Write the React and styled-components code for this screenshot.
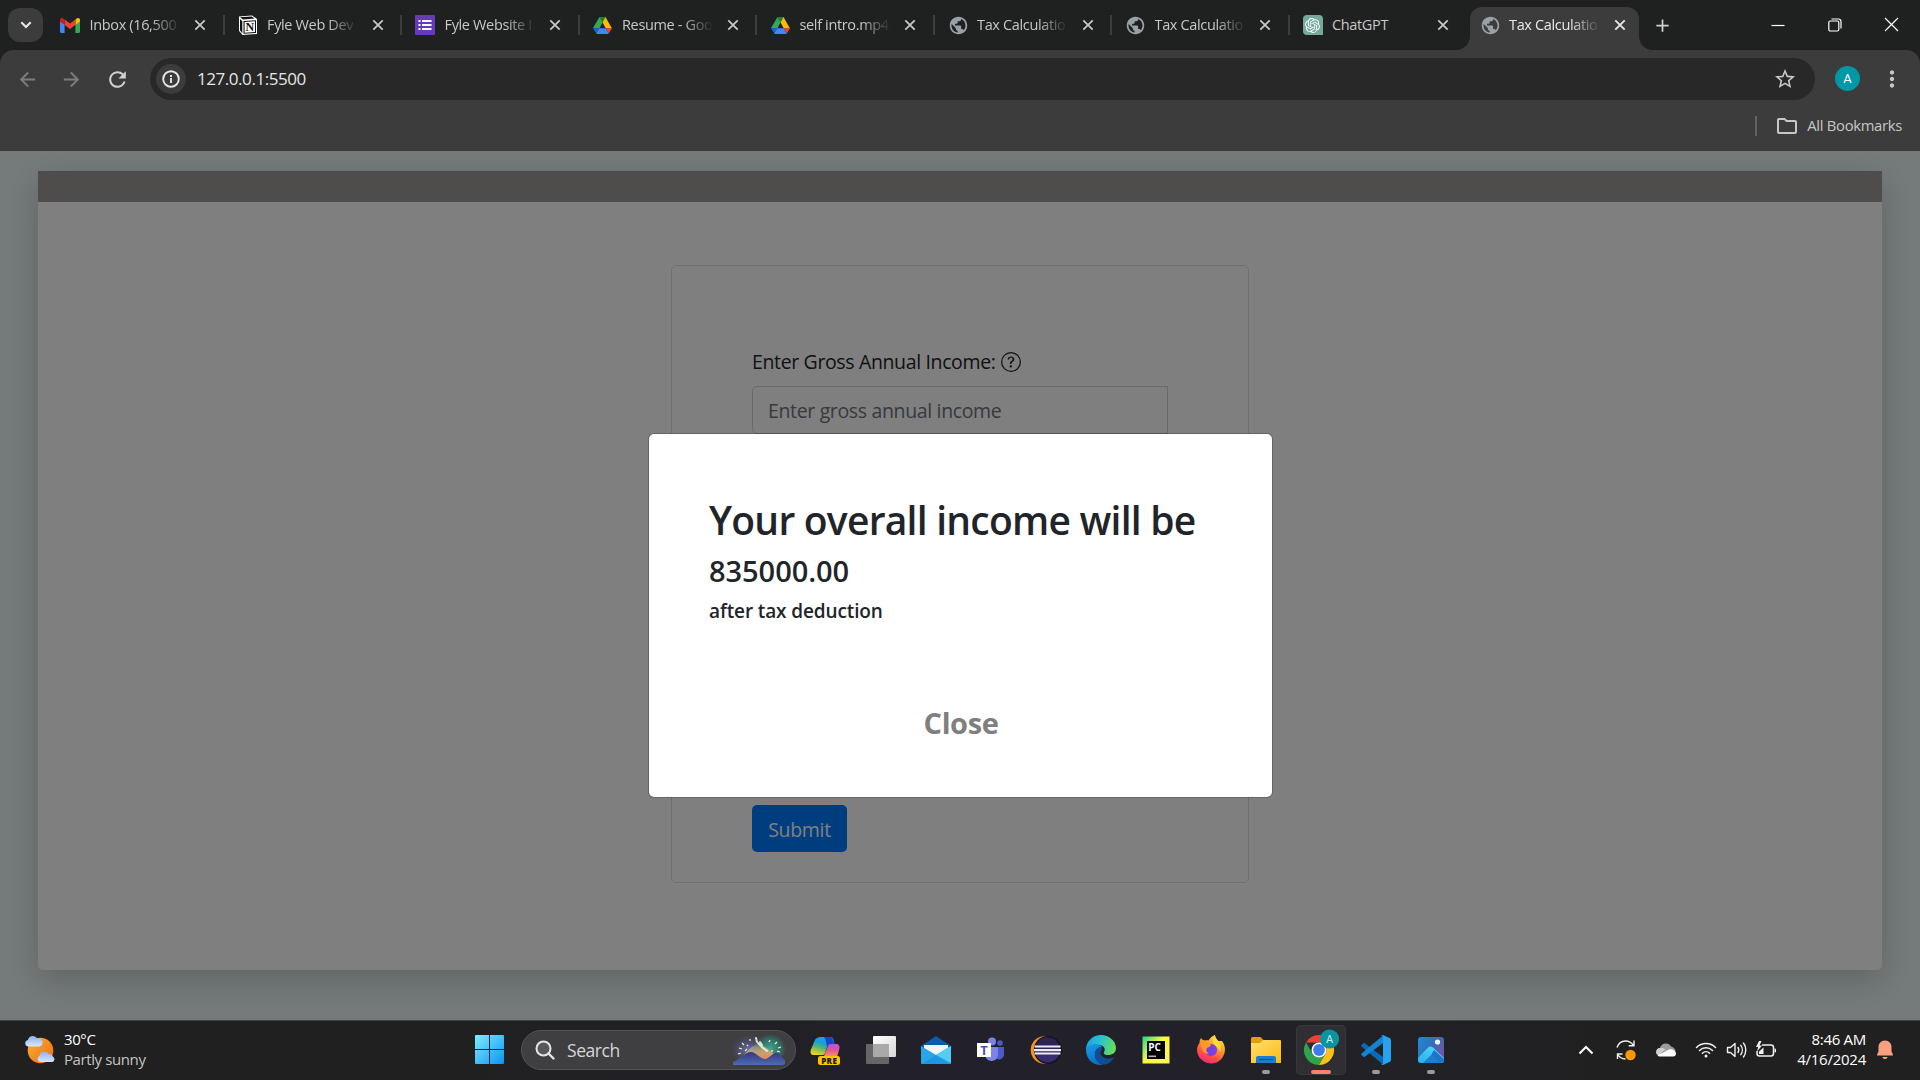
import React from "react";
import styled, { createGlobalStyle, css } from "styled-components";
import {
  MdPublic, MdAdd, MdArrowBack, MdArrowForward,
  MdRefresh, MdStarBorder, MdMoreVert, MdOutlineFolder,
} from "react-icons/md";
import { SiOpenai } from "react-icons/si";

const GlobalStyle = createGlobalStyle`
  *, *::before, *::after { box-sizing: border-box; }
  body {
    margin: 0;
    overflow: hidden;
    font-family: "Open Sans", "Noto Sans", sans-serif;
    background: #202020;
  }
  svg { display: block; flex: none; }
  h2, h4, h6 { margin: 0; font-weight: 600; }
`;

const Screen = styled.div`
  width: 1920px;
  height: 1080px;
  display: flex;
  flex-direction: column;
`;

const Label = styled.span`
  font-size: ${(p) => p.$size}px;
  letter-spacing: ${(p) => p.$track || 0}px;
  color: ${(p) => p.$color || "#fff"};
  line-height: ${(p) => p.$line || 20}px;
  white-space: nowrap;
`;

/* ---------- browser chrome ---------- */

const Browser = styled.header`
  flex: none;
  height: 151px;
  background: #1f2120;
`;

const TabStrip = styled.div`
  height: 50px;
  display: flex;
  align-items: stretch;
  padding-left: 8px;
`;

const TabSearch = styled.button`
  width: 35px;
  height: 34px;
  margin: 8px 3px 0 0;
  padding: 0;
  border: 0;
  border-radius: 12px;
  background: #3c3c3c;
  color: #e6e6e6;
  display: grid;
  place-items: center;
`;

const flare = css`
  content: "";
  position: absolute;
  bottom: 0;
  width: 13px;
  height: 13px;
`;

const Tab = styled.div`
  position: relative;
  width: 177.5px;
  display: flex;
  align-items: center;
  padding: 0 0 0 14px;
  color: #c7c7c7;
  ${(p) =>
    p.$divider &&
    css`
      &::after {
        content: "";
        position: absolute;
        right: -1px;
        top: 15px;
        width: 2px;
        height: 20px;
        background: #3d3e3e;
      }
    `}
  ${(p) =>
    p.$active &&
    css`
      width: 169px;
      margin: 7px 4.5px 0 3.5px;
      padding: 0 0 7px 10px;
      border-radius: 12px 12px 0 0;
      background: #3c3c3c;
      color: #e8e8e8;
      &::before {
        ${flare}
        left: -13px;
        background: radial-gradient(circle at 0 0, transparent 12.5px, #3c3c3c 13px);
      }
      &::after {
        ${flare}
        right: -13px;
        background: radial-gradient(circle at 100% 0, transparent 12.5px, #3c3c3c 13px);
      }
    `}
`;

const Favicon = styled.span`
  width: 20px;
  height: 20px;
  flex: none;
  display: grid;
  place-items: center;
`;

const TabTitle = styled.span`
  width: 93px;
  margin: 0 11.5px 0 9.5px;
  overflow: hidden;
  white-space: nowrap;
  font-size: 14.5px;
  line-height: 22px;
  letter-spacing: -0.35px;
  mask-image: linear-gradient(90deg, #000 65%, transparent 98%);
  ${(p) => p.$whole && "mask-image: none;"}
`;

const WindowControls = styled.div`
  margin-left: auto;
  display: flex;
  align-items: center;
  gap: 42.5px;
  padding: 0 21px 1px 0;
`;

const NewTab = styled.div`
  display: flex;
  align-items: center;
  margin-left: 9px;
  color: #d0d0d0;
`;

const Chrome = styled.div`
  height: 101px;
  border-radius: 14px 14px 0 0;
  background: #3c3c3c;
`;

const AddressRow = styled.div`
  height: 58px;
  display: flex;
  align-items: center;
  padding: 0 0 0 16px;
  color: #c7c7c7;
`;

const NavIcon = styled.span`
  flex: none;
  width: 24px;
  margin-right: ${(p) => p.$gap}px;
  color: ${(p) => (p.$muted ? "#7d7d7d" : "#d0d0d0")};
`;

const Omnibox = styled.div`
  flex: none;
  width: 1665px;
  height: 42px;
  border-radius: 21px;
  background: #282828;
  display: flex;
  align-items: center;
  padding: 0 18px 0 6px;
`;

const SiteInfo = styled.span`
  width: 30px;
  height: 30px;
  border-radius: 50%;
  background: #3c3c3c;
  display: grid;
  place-items: center;
  margin-right: 11px;
`;

const Push = styled.span`
  margin-left: auto;
`;

const Avatar = styled.span`
  flex: none;
  width: 25px;
  height: 25px;
  margin: -1px 19px 0 20px;
  border-radius: 50%;
  background: #0097a7;
  color: #fff;
  display: grid;
  place-items: center;
  font: 13px/1 Roboto, sans-serif;
`;

const BookmarkRow = styled.div`
  height: 35px;
  display: flex;
  justify-content: flex-end;
  align-items: center;
  gap: 8px;
  padding-right: 18px;
  color: #c7c7c7;
  &::before {
    content: "";
    width: 2px;
    height: 20px;
    margin-right: 10px;
    background: #636363;
  }
`;

const BookmarkLabel = styled(Label)`
  padding-bottom: 2px;
`;

/* ---------- page ---------- */

const Page = styled.main`
  position: relative;
  flex: none;
  height: 869px;
  padding: 20px 38px 0;
  background: #ebf5f6;
  overflow: hidden;
`;

const Sheet = styled.section`
  height: 799px;
  display: flex;
  flex-direction: column;
  align-items: center;
  border-radius: 0 0 5px 5px;
  background: #fff;
  box-shadow: 0 10px 34px rgba(0, 0, 0, 0.19);
`;

const SheetBar = styled.div`
  width: 100%;
  height: 31px;
  background: #9c9a96;
`;

const FormCard = styled.form`
  width: 578px;
  height: 618px;
  margin-top: 63px;
  padding: 81px 80px 30px;
  border: 1px solid rgba(0, 0, 0, 0.125);
  border-radius: 5px;
  display: flex;
  flex-direction: column;
  align-items: flex-start;
`;

const FieldLabel = styled.label`
  height: 30px;
  margin-bottom: 9px;
  display: flex;
  align-items: center;
  gap: 5px;
  & svg {
    margin-bottom: 1px;
  }
`;

const Field = styled.input`
  width: 416px;
  height: 48px;
  padding: 1px 15px 0;
  border: 1px solid #ced4da;
  border-radius: 5px 0 0 5px;
  background: #fff;
  font: 19.5px "Open Sans", sans-serif;
  letter-spacing: -0.35px;
  &::placeholder {
    color: #6c757d;
    opacity: 1;
  }
`;

const SubmitButton = styled.button`
  width: 95px;
  height: 47px;
  margin-top: auto;
  padding: 1px 0 0;
  border: 0;
  border-radius: 5px;
  background: #007bff;
  color: #fff;
  font: 19.5px "Open Sans", sans-serif;
  letter-spacing: -0.3px;
`;

const Backdrop = styled.div`
  position: absolute;
  inset: 0;
  display: flex;
  justify-content: center;
  align-items: flex-start;
  padding: 282px 0 0 1px;
  background: rgba(0, 0, 0, 0.5);
`;

const Dialog = styled.div`
  width: 625px;
  height: 365px;
  padding: 62px 59px 0 60px;
  display: flex;
  flex-direction: column;
  border: 1px solid rgba(0, 0, 0, 0.2);
  border-radius: 6px;
  background: #fff;
  background-clip: padding-box;
  color: #212529;
  white-space: nowrap;
`;

const Title = styled.h2`
  font-size: 39px;
  line-height: 48px;
  letter-spacing: -0.76px;
  margin-bottom: 9px;
`;

const Amount = styled.h4`
  font-size: 29px;
  line-height: 36px;
  letter-spacing: -0.05px;
  margin-bottom: 10px;
`;

const Note = styled.h6`
  font-size: 19px;
  line-height: 24px;
  letter-spacing: -0.12px;
`;

const CloseButton = styled.button`
  align-self: center;
  margin-top: 77px;
  padding: 0;
  border: 0;
  background: none;
  color: #7f7f7f;
  font: 700 29px/45px "Open Sans", sans-serif;
  letter-spacing: -0.4px;
`;

/* ---------- taskbar ---------- */

const Taskbar = styled.footer`
  flex: none;
  height: 60px;
  display: flex;
  align-items: center;
  padding-bottom: 1px;
  border-top: 1px solid #414343;
  background: linear-gradient(90deg, #202020 0, #202020 22%, #22202a 50%, #222127 70%, #202020 85%);
`;

const Weather = styled.div`
  width: 450px;
  padding-left: 24px;
  display: flex;
  align-items: center;
  gap: 8px;
`;

const Stack = styled.div`
  display: flex;
  flex-direction: column;
  padding-bottom: 2px;
  align-items: ${(p) => (p.$end ? "flex-end" : "flex-start")};
`;

const SearchBox = styled.div`
  width: 275px;
  height: 40px;
  margin: 0 2px 0 16px;
  padding: 0 9px 0 13px;
  display: flex;
  align-items: center;
  gap: 12px;
  border: 1px solid #545454;
  border-radius: 20px;
  background: #3f3f41;
`;

const StartButton = styled.div`
  margin-left: 25px;
`;

const AppSlot = styled.div`
  width: 50px;
  height: 50px;
  margin: 0 2.5px;
  display: flex;
  flex-direction: column;
  align-items: center;
  justify-content: space-between;
  padding: 9px 0 0;
  border-radius: 5px;
  ${(p) => p.$active && "background: #2f2f33; box-shadow: inset 0 0 0 1px #38383c;"}
  &::after {
    content: "";
    width: ${(p) => (p.$active ? 20 : 8)}px;
    height: 4px;
    margin-bottom: 1px;
    border-radius: 2px;
    background: ${(p) => (p.$active ? "#f9826c" : p.$running ? "#9b9b9b" : "transparent")};
  }
`;

const Tray = styled.div`
  margin-left: auto;
  display: flex;
  align-items: center;
  padding-right: 26px;
`;

const TraySlot = styled.span`
  width: ${(p) => p.$w}px;
  display: grid;
  place-items: center;
`;

const Clock = styled(Stack)`
  width: 80px;
  margin-right: 10px;
`;

/* ---------- drawings ---------- */

const Chevron = () => (
  <svg width="12" height="8" viewBox="0 0 12 8" fill="none" stroke="currentColor" strokeWidth="2.200">
    <path d="M1.300 1.300L6 6l4.700-4.700" />
  </svg>
);

const Gmail = () => (
  <svg width="20" height="15" viewBox="0 0 20 15">
    <path d="M0 3v10.5c0 .8.6 1.5 1.4 1.5H4.600V6.500z" fill="#4285f4" />
    <path d="M20 3v10.500c0 .8-.6 1.500-1.400 1.500H15.400V6.500z" fill="#34a853" />
    <path d="M15.400 1.500V7L20 3.500V2c0-1.800-2-2.600-3.300-1.500z" fill="#fbbc04" />
    <path d="M4.600 7V1.500L10 5.500l5.400-4V7L10 11z" fill="#ea4335" />
    <path d="M0 2v1.500L4.600 7V1.500L3.300.5C2-.6 0 .2 0 2z" fill="#c5221f" />
  </svg>
);

const Notion = () => (
  <svg width="20" height="20" viewBox="0 0 20 20">
    <path d="M1 1.500L14 .4 19 4v15L4.500 20 1 15.800z" fill="#fff" />
    <path d="M2 2.300L13.600 1.400l3 2.200L5 4.400zM2 4l2.300 2.200v12L2 15.200zM5.500 6L18 5.200v12.700L5.500 18.800z" fill="#111" />
    <path d="M6.600 7L17 6.300V17L6.600 17.700z" fill="#fff" />
    <text x="11.800" y="16.400" fontSize="12" fontWeight="700" textAnchor="middle" fontFamily="Liberation Serif, serif" fill="#111">N</text>
  </svg>
);

const Forms = () => (
  <svg width="20" height="20" viewBox="0 0 20 20">
    <rect width="20" height="20" rx="1" fill="#673ab7" />
    <path d="M3.500 5h2v2h-2zM3.500 9h2v2h-2zM3.500 13h2v2h-2zM7 5h9.500v2H7zM7 9h9.500v2H7zM7 13h9.500v2H7z" fill="#fff" />
  </svg>
);

const Drive = () => (
  <svg width="19" height="17" viewBox="0 0 19 17">
    <path d="M6.500 0h6L9.500 5.300z" fill="#188038" />
    <path d="M6.500 0L0 11l3 .5h3.500L9.500 5.300z" fill="#34a853" />
    <path d="M12.500 0L19 11.500h-6.200L9.500 5.300z" fill="#fbbc04" />
    <path d="M0 11.300h6.200L3.300 16.400z" fill="#1967d2" />
    <path d="M6.200 11.300h6.600l3 5.200c-.3.300-.7.500-1.300.500H4.500c-.5 0-.9-.2-1.200-.6z" fill="#4285f4" />
    <path d="M12.800 11.300H19l-3.200 5.300z" fill="#ea4335" />
  </svg>
);

const GptTile = styled.span`
  width: 20px;
  height: 20px;
  border-radius: 4px 4px 0 4px;
  background: #75a99c;
  color: #fff;
  display: grid;
  place-items: center;
`;

const Gpt = () => (
  <GptTile>
    <SiOpenai size={15} />
  </GptTile>
);

/* the stock page icon: a grey disc with dark land masses */
const Globe = () => <MdPublic size={21} color="#9aa0a6" />;

const Cross = () => (
  <svg width="12" height="12" viewBox="0 0 12 12" fill="none" stroke="currentColor" strokeWidth="1.800">
    <path d="M1.300 1.300l9.400 9.400M10.700 1.300l-9.400 9.400" />
  </svg>
);

const QuestionCircle = () => (
  <svg width="20" height="20" viewBox="0 0 16 16" fill="#212529">
    <path d="M8 15A7 7 0 1 1 8 1a7 7 0 0 1 0 14m0 1A8 8 0 1 0 8 0a8 8 0 0 0 0 16" />
    <path d="M5.255 5.786a.237.237 0 0 0 .241.247h.825c.138 0 .248-.113.266-.25.090-.656.540-1.134 1.342-1.134.686 0 1.314.343 1.314 1.168 0 .635-.374.927-.965 1.371-.673.489-1.206 1.060-1.168 1.987l.003.217a.250.250 0 0 0 .250.246h.811a.250.250 0 0 0 .250-.250v-.105c0-.718.273-.927 1.010-1.486.609-.463 1.244-.977 1.244-2.056 0-1.511-1.276-2.241-2.673-2.241-1.267 0-2.655.590-2.750 2.286m1.557 5.763c0 .533.425.927 1.010.927.609 0 1.028-.394 1.028-.927 0-.552-.420-.940-1.029-.940-.584 0-1.009.388-1.009.940" />
  </svg>
);

const PartlySunny = () => (
  <svg width="32" height="32" viewBox="0 0 32 32">
    <defs>
      <linearGradient id="sun" x1="0" y1="0" x2="1" y2="1">
        <stop offset="0" stopColor="#f9b233" /><stop offset="1" stopColor="#ef6c12" />
      </linearGradient>
      <linearGradient id="puff" x1="0" y1="0" x2="0" y2="1">
        <stop offset="0" stopColor="#8fb0ec" /><stop offset="1" stopColor="#dbe7fb" />
      </linearGradient>
    </defs>
    <circle cx="16.500" cy="16.500" r="12.800" fill="url(#sun)" />
    <path d="M4 12.500a3.300 3.300 0 0 1 0-6.500 5 5 0 0 1 9.300-1.500 4 4 0 0 1 2 8z" fill="url(#puff)" />
    <path d="M16 28a3.300 3.300 0 0 1-.5-6.200 5 5 0 0 1 9.300-1.800c2.500-.3 3.500 1 4 2.500a3 3 0 0 1-.3 5.500z" fill="url(#puff)" />
  </svg>
);

const Windows = () => (
  <svg width="30" height="30" viewBox="0 0 30 30">
    <defs>
      <linearGradient id="win" x1="0" y1="0" x2="1" y2="1">
        <stop offset="0" stopColor="#7fedff" /><stop offset="1" stopColor="#0a93f5" />
      </linearGradient>
    </defs>
    <path d="M1 0h13v14H0V1a1 1 0 0 1 1-1zM15 0h13a1 1 0 0 1 1 1v13H15zM0 15h14v14H1a1 1 0 0 1-1-1zM15 15h14v13a1 1 0 0 1-1 1H15z" fill="url(#win)" />
  </svg>
);

const Magnifier = () => (
  <svg width="20" height="20" viewBox="0 0 20 20" fill="none" stroke="#e6e6e6" strokeWidth="2">
    <circle cx="8.500" cy="8.500" r="7" fill="#58585a" />
    <path d="M13.500 13.500l5 5" strokeWidth="2.400" strokeLinecap="round" />
  </svg>
);

const Fireworks = () => (
  <svg width="54" height="32" viewBox="0 0 54 32">
    <defs>
      <radialGradient id="fw1"><stop offset="0" stopColor="#6a74b5" /><stop offset="1" stopColor="#4a4f8a" stopOpacity="0" /></radialGradient>
      <radialGradient id="fw2"><stop offset="0" stopColor="#49a58f" /><stop offset=".6" stopColor="#2b7d74" stopOpacity=".85" /><stop offset="1" stopColor="#2b7d74" stopOpacity="0" /></radialGradient>
      <linearGradient id="fwm" x1="0" y1="0" x2="0" y2="1"><stop offset="0" stopColor="#3a3580" /><stop offset="1" stopColor="#4b6cb4" /></linearGradient>
      <linearGradient id="fwg" x1="0" y1="0" x2="0" y2="1"><stop offset="0" stopColor="#e0cfa6" stopOpacity=".1" /><stop offset=".6" stopColor="#c7a26c" /><stop offset="1" stopColor="#ee7f60" /></linearGradient>
    </defs>
    <ellipse cx="17" cy="16" rx="18" ry="15" fill="url(#fw1)" />
    <ellipse cx="38" cy="15" rx="16" ry="15" fill="url(#fw2)" />
    <path d="M12 21q8-10 15-12 7 3 15 11l-7 6z" fill="url(#fwg)" />
    <path d="M1 31v-3C7 26 13 18 19 18c5 0 9 7 14 7 4 0 7-6 11-6s6 5 9 7v3q0 2-4 2z" fill="url(#fwm)" />
    <path d="M7 14l3 1M10 9l2 2M18 5l0 2M6 20l3-1M38 6l-1 2M45 8l-2 2M49 13l-3 1M48 18l-3-1M40 18v-2M13 17l2-2M15 11l1 1" stroke="#fff1cf" strokeWidth="1.200" />
    <path d="M24 4l1 4M26 9l5 5M30 13l5 4M28 8l2 3" stroke="#fff6e0" strokeWidth="2" strokeLinecap="round" fill="none" opacity=".85" />
  </svg>
);

const Copilot = () => (
  <svg width="32" height="32" viewBox="0 0 32 32">
    <defs>
      <linearGradient id="cpa" x1=".7" y1="0" x2=".3" y2="1"><stop offset="0" stopColor="#1fa2e8" /><stop offset=".35" stopColor="#159de0" /><stop offset=".6" stopColor="#4db574" /><stop offset="1" stopColor="#f3d41c" /></linearGradient>
      <linearGradient id="cpb" x1=".5" y1="0" x2=".5" y2="1"><stop offset="0" stopColor="#b455e0" /><stop offset=".5" stopColor="#e0559a" /><stop offset="1" stopColor="#ff8d5c" /></linearGradient>
    </defs>
    <path d="M11 3h9c2 0 3 1 3.500 3l1 4h-4c-2 0-3 1-3.500 3l-2 6c-.5 1.500-1.500 2-3 2H4c-3 0-4-2-3.200-5L4.500 7C5.500 4 8 3 11 3z" fill="url(#cpa)" />
    <path d="M14 3h6c1.500 0 2.400 1 3 3l1.300 4H20.500c-1.500 0-2.500 0-3.500 3-.6-4-1-7-3-10z" fill="#1b45c8" />
    <path d="M21 10h5c3 0 4 2 3.300 5l-2 7H14l3.500-9c.6-2 1.500-3 3.500-3z" fill="url(#cpb)" />
    <rect x="8" y="22" width="22" height="9" rx="2.500" fill="#fdc500" />
    <text x="19.200" y="29.500" fontSize="8" fontWeight="800" textAnchor="middle" letterSpacing=".4" fontFamily="Open Sans, sans-serif" fill="#1b1b1b">PRE</text>
  </svg>
);

const TaskView = () => (
  <svg width="32" height="32" viewBox="0 0 32 32">
    <defs><linearGradient id="tv" x1="0" y1="0" x2="1" y2="1"><stop offset="0" stopColor="#fff" /><stop offset="1" stopColor="#d6d6d6" /></linearGradient></defs>
    <rect x="1" y="10" width="23" height="20" rx="1" fill="#666" />
    <rect x="8" y="2" width="23" height="21" rx="1" fill="url(#tv)" />
    <path d="M8 10h16v13H8z" fill="#a9a9a9" />
  </svg>
);

const Mail = () => (
  <svg width="32" height="32" viewBox="0 0 32 32">
    <path d="M1 12L16 2l15 10v3H1z" fill="#0b5cab" />
    <path d="M4 11h24v10H4z" fill="#f4f4f4" />
    <path d="M1 12l15 9 15-9v17a1 1 0 0 1-1 1H2a1 1 0 0 1-1-1z" fill="#27a7e8" />
    <path d="M16 21l15-9v17z" fill="#54cdf6" />
    <path d="M16 21l14 9H2z" fill="#1f97e0" />
  </svg>
);

const Teams = () => (
  <svg width="32" height="32" viewBox="0 0 32 32">
    <circle cx="17" cy="7.500" r="4" fill="#7b83eb" />
    <circle cx="25" cy="9" r="2.800" fill="#5059c9" />
    <path d="M20 13h9v8a5 5 0 0 1-7 4z" fill="#5059c9" />
    <path d="M11 13h12v8a6.500 6.500 0 0 1-12 3z" fill="#7b83eb" />
    <rect x="2" y="9" width="14" height="14" fill="#fff" />
    <text x="9" y="20.500" fontSize="13" fontWeight="700" textAnchor="middle" fontFamily="Open Sans, sans-serif" fill="#4b53bc">T</text>
  </svg>
);

const Eclipse = () => (
  <svg width="32" height="32" viewBox="0 0 32 32">
    <circle cx="14.500" cy="16" r="13.800" fill="#f7941e" />
    <circle cx="17.800" cy="16" r="14" fill="#151320" />
    <circle cx="17.500" cy="16" r="12.800" fill="#2c2255" />
    <path d="M5 18h25a12.800 12.800 0 0 1-25 0z" fill="#3a2c72" />
    <path d="M4.500 11.500h26v2h-26zM4 15h27v2.200H4zM4.500 18.500h26v2h-26z" fill="#eceaf4" />
  </svg>
);

const Edge = () => (
  <svg width="32" height="32" viewBox="0 0 32 32">
    <defs>
      <linearGradient id="eg1" x1="0" y1=".3" x2="1" y2=".5"><stop offset="0" stopColor="#1aa3e0" /><stop offset=".5" stopColor="#2cc3cc" /><stop offset="1" stopColor="#66e04f" /></linearGradient>
      <linearGradient id="eg2" x1="0" y1="0" x2=".4" y2="1"><stop offset="0" stopColor="#1a9ce4" /><stop offset="1" stopColor="#0a6fcb" /></linearGradient>
    </defs>
    <path d="M1 16C1 7 8 1 16 1s15 6 15 13c0 5-4 7-8 7-3.500 0-5-1.500-4-3 2-3 0-7-5-7C8 11 3 13 1 17z" fill="url(#eg1)" />
    <path d="M1 16c1-4 5-6 9-6 3 0 6 1 7 3-4 0-7 3-7 8 0 4 3 8 8 10C8 32 1 25 1 16z" fill="url(#eg2)" />
    <path d="M17 13c-5 0-7 4-7 8 0 5 4 9 9 9.700 5-.7 8-3.700 10-7.200-4 1.500-8 1.500-11-.5-3-2-3.500-5-1-7z" fill="#0d4f96" />
  </svg>
);

const PyCharm = () => (
  <svg width="32" height="32" viewBox="0 0 32 32">
    <defs><linearGradient id="pc" x1="0" y1="0" x2=".5" y2=".4"><stop offset="0" stopColor="#1fd789" /><stop offset="1" stopColor="#fcf84a" /></linearGradient></defs>
    <rect x="2.500" y="2.500" width="27" height="27" fill="url(#pc)" />
    <rect x="7" y="7" width="18" height="18" fill="#000" />
    <text x="14.500" y="16.500" fontSize="10" fontWeight="700" textAnchor="middle" fontFamily="Open Sans, sans-serif" fill="#fff">PC</text>
    <path d="M8.500 21.500h7.500v1.600H8.500z" fill="#b9b9b9" />
  </svg>
);

const Firefox = () => (
  <svg width="32" height="32" viewBox="0 0 32 32">
    <defs><linearGradient id="ff" x1=".8" y1="0" x2=".3" y2="1"><stop offset="0" stopColor="#fff04a" /><stop offset=".4" stopColor="#ff9a2a" /><stop offset=".75" stopColor="#ff4a46" /><stop offset="1" stopColor="#e82a82" /></linearGradient></defs>
    <path d="M6 4c1 1.500 2 2 3.500 2.500 2-.5 3-.5 4 0C15 4 17 2 20 1c0 3 2 4 3.500 6L27 7c3 4 3.500 8 2.500 12-2 7-8 11-14 10.500C8 29 2 23 2 16c0-3 1-5 2.500-7C4.500 7 5 5.500 6 4z" fill="url(#ff)" />
    <circle cx="16" cy="16" r="6" fill="#7a3fe0" />
    <path d="M6 9c5 0 7 0 10 2-1 2-3 2-4 3s-1 4 2 6c-5 0-8-4-8-11z" fill="#ff9a2a" />
    <path d="M20 1c0 4 4 6 5 10 1 3 1 5 0 7-1-3-2-5-4.500-6.500C18 10 17 5 20 1z" fill="#ffdd3c" />
  </svg>
);

const Explorer = () => (
  <svg width="32" height="32" viewBox="0 0 32 32">
    <defs><linearGradient id="fe" x1="0" y1="0" x2="1" y2="1"><stop offset="0" stopColor="#ffe070" /><stop offset="1" stopColor="#fdb913" /></linearGradient></defs>
    <path d="M1 4.500A1.500 1.500 0 0 1 2.500 3h8l3 3H30v6H1z" fill="#e0a008" />
    <path d="M1 9h9l3-3h17a1 1 0 0 1 1 1v22H1z" fill="url(#fe)" />
    <path d="M6 29v-5a2 2 0 0 1 2-2h16a2 2 0 0 1 2 2v5z" fill="#1380d4" />
    <path d="M9 25.500h14" stroke="#0b4f95" strokeWidth="1.200" />
  </svg>
);

const BadgedIcon = styled.svg`
  margin-top: -5px;
`;

const ChromeLogo = () => (
  <BadgedIcon width="36" height="36" viewBox="0 0 36 36">
    <path d="M3 13.500A15 15 0 0 1 29 13.500H16z" fill="#ea4335" />
    <path d="M3 13.500A15 15 0 0 0 16 36l6.500-11.250A7.500 7.500 0 0 1 9.500 24.750z" fill="#2ea44f" />
    <path d="M29 13.500A15 15 0 0 1 16 36l6.500-11.250A7.500 7.500 0 0 0 16 13.500z" fill="#fbc116" />
    <circle cx="16" cy="21" r="7.500" fill="#fff" />
    <circle cx="16" cy="21" r="5.900" fill="#3b7ded" />
    <circle cx="26.500" cy="10" r="9.600" fill="#0d93a0" />
    <text x="26.500" y="14" fontSize="11" textAnchor="middle" fontFamily="Roboto, sans-serif" fill="#c9f0f2">A</text>
  </BadgedIcon>
);

const VsCode = () => (
  <svg width="32" height="32" viewBox="0 0 32 32">
    <path d="M1.500 11l2-1.800c.4-.3.900-.3 1.300 0L23 23v7.500L1.500 12.500c-.4-.4-.4-1.100 0-1.500z" fill="#0a6ab8" />
    <path d="M1.500 21l2 1.800c.4.3.9.3 1.300 0L23 9V1.500L1.500 19.500c-.4.400-.4 1.100 0 1.500z" fill="#1583cf" />
    <path d="M23 1l7 3.300c.6.300 1 .9 1 1.600v20.200c0 .7-.4 1.300-1 1.600L23 31c-1 .3-2-.2-2-.7.900.4 2 .1 2-1.300V3c0-1.400-1-1.800-2-1.300 0-.5 1-1 2-.7z" fill="#26a3ee" />
  </svg>
);

const Photos = () => (
  <svg width="32" height="32" viewBox="0 0 32 32">
    <defs>
      <linearGradient id="ph" x1="0" y1="0" x2="1" y2=".6"><stop offset="0" stopColor="#1590dc" /><stop offset=".6" stopColor="#3d68b4" /><stop offset="1" stopColor="#7a53a6" /></linearGradient>
      <linearGradient id="ph2" x1="0" y1="1" x2="1" y2="0"><stop offset="0" stopColor="#22aef0" /><stop offset="1" stopColor="#5be0fb" /></linearGradient>
    </defs>
    <rect x="3" y="3" width="26" height="26" rx="3" fill="url(#ph)" />
    <path d="M3 24l10-10.500c1.500-1.500 3.500-1.500 5 0L29 24v2a3 3 0 0 1-3 3H6a3 3 0 0 1-3-3z" fill="url(#ph2)" />
    <path d="M8 29l8-8 9 8z" fill="#1a7fd2" />
    <path d="M16 21l3-5 10 9v1a3 3 0 0 1-3 3h-2z" fill="#1877c8" />
    <circle cx="22.500" cy="8" r="2.600" fill="#eaf4ff" />
  </svg>
);

const Sync = () => (
  <svg width="22" height="22" viewBox="0 0 22 22" fill="none" stroke="#f0f0f0" strokeWidth="1.400">
    <path d="M2 8.500C3.500 4 6.500 2 10.500 2c3.500 0 6 1.500 8 4.500M19 1.500v5.300h-5.300M2.500 20v-5h5M2.500 15c2 3.500 5 5 8 5" />
    <circle cx="15.500" cy="16" r="5.200" fill="#ff9800" stroke="none" />
  </svg>
);

const Cloud = () => (
  <svg width="22" height="16" viewBox="0 0 22 16">
    <path d="M5 6a6 6 0 0 1 11-1.500c3 .5 4.500 3 4.500 5H2C2 7.500 3 6 5 6z" fill="#9c9c9c" />
    <path d="M5 6c2-.5 4 .5 5.500 2l-6 4.500C2 13.500 1 12 1 10.200 1 8 2.500 6 5 6z" fill="#cfcfcf" />
    <path d="M2.500 13L13 8c2-1.500 7-.5 8 3 .3 2-1 3.500-3 3.500H5c-1.500 0-2.300-.6-2.500-1.500z" fill="#fff" />
  </svg>
);

const Wifi = () => (
  <svg width="22" height="18" viewBox="0 0 22 18" fill="none" stroke="#f0f0f0" strokeWidth="1.500" strokeLinecap="round">
    <path d="M1.500 6.500a13.500 13.500 0 0 1 19 0M4.500 9.500a9.300 9.300 0 0 1 13 0M7.400 12.300a5.200 5.200 0 0 1 7.200 0" />
    <circle cx="11" cy="15" r="1.500" fill="#f0f0f0" stroke="none" />
  </svg>
);

const Speaker = () => (
  <svg width="22" height="20" viewBox="0 0 22 20" fill="none" stroke="#f0f0f0" strokeWidth="1.400" strokeLinejoin="round" strokeLinecap="round">
    <path d="M1.500 7.500h3L9 3.500v13l-4.500-4h-3zM12 7.500c1 1.500 1 3.500 0 5M14.800 5.300c2 2.700 2 6.700 0 9.400M17.500 3c3 4 3 10 0 14" />
  </svg>
);

const Battery = () => (
  <svg width="22" height="18" viewBox="0 0 22 18">
    <path d="M7 4h9a2.500 2.500 0 0 1 2.500 2.500v6A2.500 2.500 0 0 1 16 15H4.500A2.500 2.500 0 0 1 2 12.500V10" fill="none" stroke="#f0f0f0" strokeWidth="1.500" />
    <path d="M19.500 7.500c1 0 1.500.5 1.500 1v2c0 .6-.5 1-1.500 1zM4 13v-2.500L8.500 6.500v6.500z" fill="#f0f0f0" />
    <path d="M4 0L1 6h2.200L2 10.500 7 4.500H4.500L6.500 0z" fill="#f0f0f0" />
  </svg>
);

const Bell = () => (
  <svg width="18" height="20" viewBox="0 0 18 20" fill="#fb9f82">
    <path d="M9 .5c4 0 6.500 3 6.500 6.500v4.500l1.500 3.200c.2.400 0 .8-.5.800h-15c-.5 0-.7-.4-.5-.800l1.500-3.200V7C2.500 3.500 5 .5 9 .5zM6.500 17h5c-.4 1.500-1.300 2-2.500 2s-2.100-.5-2.500-2z" />
  </svg>
);

/* ---------- data ---------- */

const tabs = [
  { title: "Inbox (16,500", icon: Gmail },
  { title: "Fyle Web Dev", icon: Notion },
  { title: "Fyle Website I", icon: Forms },
  { title: "Resume - Goo", icon: Drive },
  { title: "self intro.mp4", icon: Drive },
  { title: "Tax Calculatio", icon: Globe },
  { title: "Tax Calculatio", icon: Globe },
  { title: "ChatGPT", icon: Gpt, whole: true },
  { title: "Tax Calculatio", icon: Globe, active: true },
];

const apps = [
  { icon: Copilot }, { icon: TaskView }, { icon: Mail }, { icon: Teams },
  { icon: Eclipse }, { icon: Edge }, { icon: PyCharm }, { icon: Firefox },
  { icon: Explorer, running: true }, { icon: ChromeLogo, active: true },
  { icon: VsCode, running: true }, { icon: Photos, running: true },
];

export default function App() {
  return (
    <Screen>
      <GlobalStyle />
      <Browser>
        <TabStrip>
          <TabSearch><Chevron /></TabSearch>
          {tabs.map(({ title, icon: Icon, active, whole }, i) => (
            <Tab key={i} $active={active} $divider={i < 7}>
              <Favicon><Icon /></Favicon>
              <TabTitle $whole={whole}>{title}</TabTitle>
              <Cross />
            </Tab>
          ))}
          <NewTab><MdAdd size={21} /></NewTab>
          <WindowControls>
            <svg width="14" height="14" viewBox="0 0 14 14" stroke="#fff" strokeWidth="1.200"><path d="M.5 7.500h13" /></svg>
            <svg width="14" height="14" viewBox="0 0 14 14" fill="none" stroke="#fff" strokeWidth="1.200">
              <rect x=".8" y="3" width="10" height="10" rx="1.500" />
              <path d="M3.500 1h7a2.500 2.500 0 0 1 2.500 2.500v7" />
            </svg>
            <svg width="15" height="15" viewBox="0 0 15 15" stroke="#fff" strokeWidth="1.200"><path d="M1 1l13 13M14 1L1 14" /></svg>
          </WindowControls>
        </TabStrip>
        <Chrome>
          <AddressRow>
            <NavIcon $muted $gap={20}><MdArrowBack size={23} /></NavIcon>
            <NavIcon $muted $gap={21}><MdArrowForward size={23} /></NavIcon>
            <NavIcon $gap={21}><MdRefresh size={25} /></NavIcon>
            <Omnibox>
              <SiteInfo>
                <svg width="18" height="18" viewBox="0 0 18 18" fill="none" stroke="#e6e6e6" strokeWidth="1.900">
                  <circle cx="9" cy="9" r="7.800" /><path d="M9 8v5M9 5v2" />
                </svg>
              </SiteInfo>
              <Label $size={17} $track={-0.45} $color="#e6e6e6" $line={24}>127.0.0.1:5500</Label>
              <Push><MdStarBorder size={24} /></Push>
            </Omnibox>
            <Avatar>A</Avatar>
            <MdMoreVert size={26} />
          </AddressRow>
          <BookmarkRow>
            <MdOutlineFolder size={24} />
            <BookmarkLabel $size={14.8} $track={-0.3} $color="#c7c7c7">All Bookmarks</BookmarkLabel>
          </BookmarkRow>
        </Chrome>
      </Browser>

      <Page>
        <Sheet>
          <SheetBar />
          <FormCard>
            <FieldLabel>
              <Label $size={19.5} $track={-0.36} $color="#212529" $line={30}>Enter Gross Annual Income:</Label>
              <QuestionCircle />
            </FieldLabel>
            <Field placeholder="Enter gross annual income" />
            <SubmitButton type="button">Submit</SubmitButton>
          </FormCard>
        </Sheet>
        <Backdrop>
          <Dialog>
            <Title>Your overall income will be</Title>
            <Amount>835000.00</Amount>
            <Note>after tax deduction</Note>
            <CloseButton>Close</CloseButton>
          </Dialog>
        </Backdrop>
      </Page>

      <Taskbar>
        <Weather>
          <PartlySunny />
          <Stack>
            <Label $size={15} $track={-0.4}>30°C</Label>
            <Label $size={15} $track={-0.4} $color="#c4c4c4">Partly sunny</Label>
          </Stack>
        </Weather>
        <StartButton><Windows /></StartButton>
        <SearchBox>
          <Magnifier />
          <Label $size={17.5} $track={-0.45} $color="#d6d6d6" $line={24}>Search</Label>
          <Push><Fireworks /></Push>
        </SearchBox>
        {apps.map(({ icon: Icon, active, running }, i) => (
          <AppSlot key={i} $active={active} $running={running}><Icon /></AppSlot>
        ))}
        <Tray>
          <TraySlot $w={40}>
            <svg width="16" height="10" viewBox="0 0 16 10" fill="none" stroke="#fff" strokeWidth="2"><path d="M1.500 8.500L8 2l6.500 6.500" /></svg>
          </TraySlot>
          <TraySlot $w={40}><Sync /></TraySlot>
          <TraySlot $w={40}><Cloud /></TraySlot>
          <TraySlot $w={40}><Wifi /></TraySlot>
          <TraySlot $w={20}><Speaker /></TraySlot>
          <TraySlot $w={40}><Battery /></TraySlot>
          <Clock $end>
            <Label $size={15} $track={-0.3}>8:46 AM</Label>
            <Label $size={15} $track={-0.25}>4/16/2024</Label>
          </Clock>
          <Bell />
        </Tray>
      </Taskbar>
    </Screen>
  );
}
